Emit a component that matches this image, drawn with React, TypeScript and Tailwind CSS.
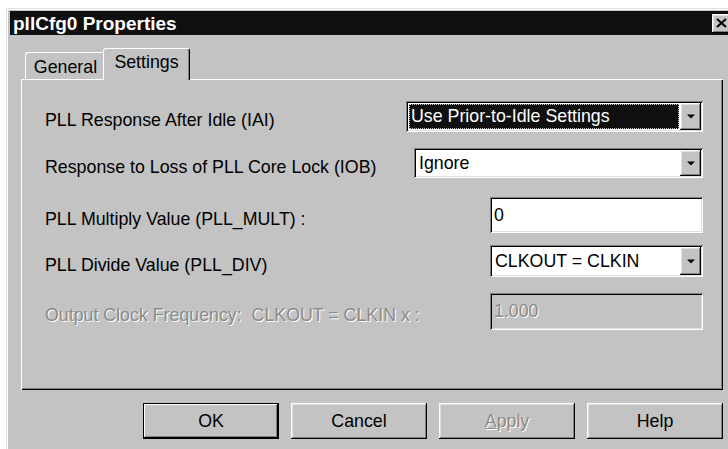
import { useState } from 'react'

// classic 3D bevels
const raised =
  'shadow-[inset_-1px_-1px_0_#000,inset_1px_1px_0_#fff,inset_-2px_-2px_0_#808080,inset_2px_2px_0_#dfdfdf]'
const sunken =
  'shadow-[inset_1px_1px_0_#808080,inset_-1px_-1px_0_#fff,inset_2px_2px_0_#000,inset_-2px_-2px_0_#dfdfdf]'
const etched = 'text-[#8a8a8a] [text-shadow:1px_1px_0_#fff]'

function DownArrow() {
  return (
    <svg width="8" height="5" viewBox="0 0 8 5">
      <path d="M0 0.5h8L4 4.5z" fill="#000" />
    </svg>
  )
}

function Combo({ value, className, focused }: { value: string; className: string; focused?: boolean }) {
  return (
    <div className={`flex bg-white p-[2px] ${sunken} ${className}`}>
      <div className="flex min-w-0 flex-1 items-center p-[1px]">
        <div
          className={`flex h-full flex-1 items-center pl-[2px] ${
            focused ? 'bg-[#0f0f0f] text-white outline-1 outline-dotted outline-[#c3c3c3] -outline-offset-1' : 'text-black'
          }`}
        >
          {value}
        </div>
      </div>
      <div className={`flex w-[21px] min-w-[21px] shrink-0 items-center justify-center bg-[#c3c3c3] ${raised}`}>
        <DownArrow />
      </div>
    </div>
  )
}

function TextBox({ value, className, disabled }: { value: string; className: string; disabled?: boolean }) {
  return (
    <div
      className={`flex items-center px-[4px] ${sunken} ${disabled ? `bg-[#c3c3c3] ${etched}` : 'bg-white text-black'} ${className}`}
    >
      {value}
    </div>
  )
}

function Row({ label, disabled, className, children }: { label: string; disabled?: boolean; className: string; children: React.ReactNode }) {
  return (
    <div className={`flex items-center justify-between ${className}`}>
      <span className={`whitespace-pre pt-[7px] leading-[20px] ${disabled ? etched : 'text-black'}`}>{label}</span>
      {children}
    </div>
  )
}

function DialogButton({ label, isDefault, disabled }: { label: React.ReactNode; isDefault?: boolean; disabled?: boolean }) {
  return (
    <button
      className={`flex h-[36px] w-[136px] items-center justify-center bg-[#c3c3c3] ${
        isDefault
          ? 'border border-black shadow-[inset_-1px_-1px_0_#000,inset_1px_1px_0_#fff,inset_-2px_-2px_0_#808080]'
          : raised
      } ${disabled ? etched : 'text-black'}`}
    >
      {label}
    </button>
  )
}

export default function App() {
  const [tab, setTab] = useState<'general' | 'settings'>('settings')

  return (
    <div
      className="h-[449px] w-[728px] overflow-hidden bg-white pl-[6px] pt-[8px] text-[17.8px]"
      style={{ fontFamily: '"Liberation Sans", Arial, sans-serif' }}
    >
      <div className="h-[460px] w-[740px] bg-[#c3c3c3] pl-[4px] pt-[3px] shadow-[inset_1px_1px_0_#dfdfdf,inset_2px_2px_0_#fff]">
        {/* title bar */}
        <div className="flex h-[24px] w-[726px] items-center justify-between bg-[#0f0f0f] pl-[3px] pr-[3px]">
          <span className="text-[19px] font-bold leading-none text-white">pllCfg0 Properties</span>
          <div className={`flex h-[19px] w-[21px] items-center justify-center pr-[2px] bg-[#c3c3c3] ${raised}`}>
            <svg width="11" height="10" viewBox="0 0 11 10">
              <path d="M1 1l9 8M10 1l-9 8" stroke="#000" strokeWidth="2" />
            </svg>
          </div>
        </div>

        <div className="ml-[11px] w-[702px]">
          {/* tabs */}
          <div className="mt-[13px] flex h-[31px] items-end pl-[4px]">
            <div
              onClick={() => setTab('general')}
              className="flex h-[27px] w-[80px] items-center justify-center rounded-t-[3px] border-l border-t border-white pt-[2px] text-black shadow-[inset_-1px_0_0_#808080]"
            >
              General
            </div>
            <div
              onClick={() => setTab('settings')}
              className="relative z-10 -mb-[1px] -ml-[2px] flex h-[32px] w-[87px] items-center justify-center rounded-t-[3px] border-l border-r border-t border-l-white border-r-black border-t-white bg-[#c3c3c3] pb-[4px] text-black shadow-[inset_-1px_0_0_#808080]"
            >
              Settings
            </div>
          </div>

          {/* tab page */}
          <div className="h-[311px] border-l border-t border-white pl-[23px] pr-[20px] shadow-[inset_-1px_-1px_0_#000,inset_-2px_-2px_0_#808080]">
            {tab === 'settings' && (
              <>
                <Row label="PLL Response After Idle (IAI)" className="mt-[21px] h-[31px]">
                  <Combo value="Use Prior-to-Idle Settings" className="h-[31px] w-[297px]" focused />
                </Row>
                <Row label="Response to Loss of PLL Core Lock (IOB)" className="mt-[16px] h-[30px]">
                  <Combo value="Ignore" className="h-[30px] w-[289px]" />
                </Row>
                <Row label="PLL Multiply Value (PLL_MULT) :" className="mt-[19px] h-[36px]">
                  <TextBox value="0" className="h-[36px] w-[213px]" />
                </Row>
                <Row label="PLL Divide Value (PLL_DIV)" className="mt-[12px] h-[32px]">
                  <Combo value="CLKOUT = CLKIN" className="h-[32px] w-[213px]" />
                </Row>
                <Row label="Output Clock Frequency:  CLKOUT = CLKIN x :" disabled className="mt-[16px] h-[37px]">
                  <TextBox value="1.000" disabled className="h-[37px] w-[213px]" />
                </Row>
              </>
            )}
          </div>

          {/* buttons */}
          <div className="mt-[13px] flex justify-end gap-[12px]">
            <DialogButton label="OK" isDefault />
            <DialogButton label="Cancel" />
            <DialogButton label={<><span className="underline">A</span>pply</>} disabled />
            <DialogButton label="Help" />
          </div>
        </div>
      </div>
    </div>
  )
}
